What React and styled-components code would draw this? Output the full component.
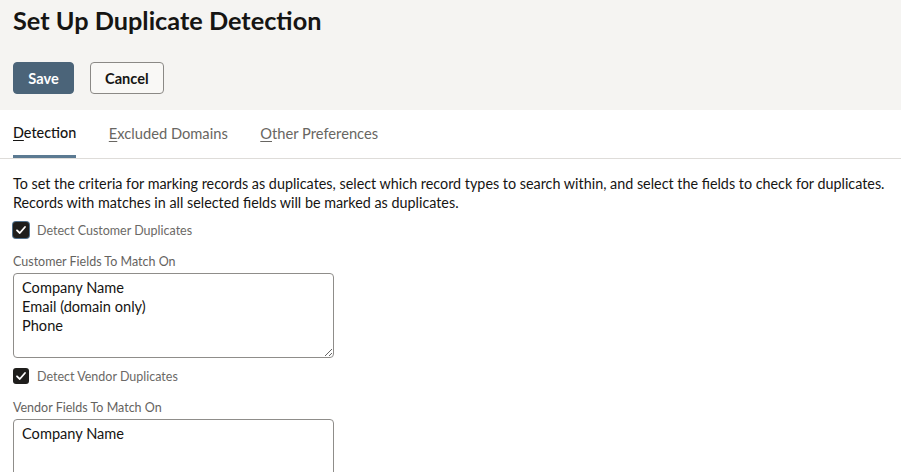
import React from "react";
import styled, { createGlobalStyle } from "styled-components";

const GlobalStyle = createGlobalStyle`
  html, body { margin: 0; padding: 0; background: #ffffff; }
  body { font-family: Lato, "Noto Sans", sans-serif; color: #161513; }
  * { box-sizing: border-box; }
`;

const Page = styled.div`
  display: flex;
  flex-direction: column;
  width: 901px;
  min-height: 472px;
  overflow: hidden;
`;

const Header = styled.header`
  background: #f5f4f2;
  padding: 5px 13px 16px;
  display: flex;
  flex-direction: column;
  gap: 27px;
`;

const Title = styled.h1`
  margin: 0;
  font-size: 25.3px;
  line-height: 30px;
  font-weight: 700;
  color: #161513;
`;

const Toolbar = styled.div`
  display: flex;
  gap: 16px;
`;

const Button = styled.button`
  height: 32px;
  padding: 0 14px;
  border-radius: 4px;
  font-family: Lato, "Noto Sans", sans-serif;
  font-size: 14.6px;
  font-weight: 700;
  cursor: pointer;
  border: 1px solid ${p => (p.$primary ? "#4b6479" : "#8b8986")};
  background: ${p => (p.$primary ? "#4b6479" : "#f9f8f6")};
  color: ${p => (p.$primary ? "#ffffff" : "#161513")};
  min-width: ${p => (p.$primary ? "61px" : "73px")};
`;

const TabList = styled.nav`
  display: flex;
  gap: 32.5px;
  padding: 0 13px;
  border-bottom: 1px solid #dedcd9;
`;

const Tab = styled.div`
  height: 48px;
  display: flex;
  align-items: center;
  padding-top: 0;
  font-size: ${p => (p.$active ? "14.4px" : "14.7px")};
  font-weight: ${p => (p.$active ? 500 : 400)};
  color: ${p => (p.$active ? "#161513" : "#686662")};
  border-bottom: 3px solid ${p => (p.$active ? "#5b7a92" : "transparent")};
  white-space: nowrap;
`;

const Key = styled.span`
  text-decoration: underline;
  text-underline-offset: 2px;
`;

const Content = styled.main`
  padding: 15px 13px 0;
  display: flex;
  flex-direction: column;
`;

const Intro = styled.p`
  margin: 0;
  font-size: 14.35px;
  line-height: 19px;
  color: #161513;
`;

const CheckRow = styled.label`
  display: flex;
  align-items: center;
  gap: 8px;
  height: 20px;
  margin-top: ${p => p.$mt || "8px"};
  font-size: 12.5px;
  color: #6b6966;
`;

const Box = styled.span`
  width: 16px;
  height: 16px;
  border-radius: 3px;
  background: #1f1e1c;
  display: inline-flex;
  align-items: center;
  justify-content: center;
  box-shadow: ${p => (p.$focus ? "0 0 0 1px #4f6f8a" : "none")};
`;

const FieldLabel = styled.div`
  margin-top: 14px;
  font-size: 12.5px;
  line-height: 15px;
  color: #65635f;
`;

const Area = styled.textarea`
  display: block;
  margin-top: 4px;
  width: 321px;
  height: 85px;
  padding: 4px 8px;
  border: 1px solid #8f8d8a;
  border-radius: 4px;
  font-family: Lato, "Noto Sans", sans-serif;
  font-size: 14.6px;
  line-height: 19px;
  color: #161513;
  background: #ffffff;
  outline: none;
  flex-shrink: 0;
`;

function Check({ focus }) {
  return (
    <Box $focus={focus}>
      <svg width="12" height="12" viewBox="0 0 12 12" fill="none">
        <path d="M2 6.3 L4.8 9 L10 3" stroke="#ffffff" strokeWidth="1.8" strokeLinecap="round" strokeLinejoin="round" />
      </svg>
    </Box>
  );
}

export default function App() {
  return (
    <Page>
      <GlobalStyle />
      <Header>
        <Title>Set Up Duplicate Detection</Title>
        <Toolbar>
          <Button $primary>Save</Button>
          <Button>Cancel</Button>
        </Toolbar>
      </Header>
      <TabList>
        <Tab $active><span><Key>D</Key>etection</span></Tab>
        <Tab><span><Key>E</Key>xcluded Domains</span></Tab>
        <Tab><span><Key>O</Key>ther Preferences</span></Tab>
      </TabList>
      <Content>
        <Intro>
          To set the criteria for marking records as duplicates, select which record types to search within, and select the fields to check for duplicates.
          <br />
          Records with matches in all selected fields will be marked as duplicates.
        </Intro>
        <CheckRow>
          <Check focus />
          Detect Customer Duplicates
        </CheckRow>
        <FieldLabel>Customer Fields To Match On</FieldLabel>
        <Area readOnly defaultValue={"Company Name\nEmail (domain only)\nPhone"} />
        <CheckRow $mt="8px">
          <Check />
          Detect Vendor Duplicates
        </CheckRow>
        <FieldLabel>Vendor Fields To Match On</FieldLabel>
        <Area readOnly defaultValue={"Company Name"} />
      </Content>
    </Page>
  );
}
